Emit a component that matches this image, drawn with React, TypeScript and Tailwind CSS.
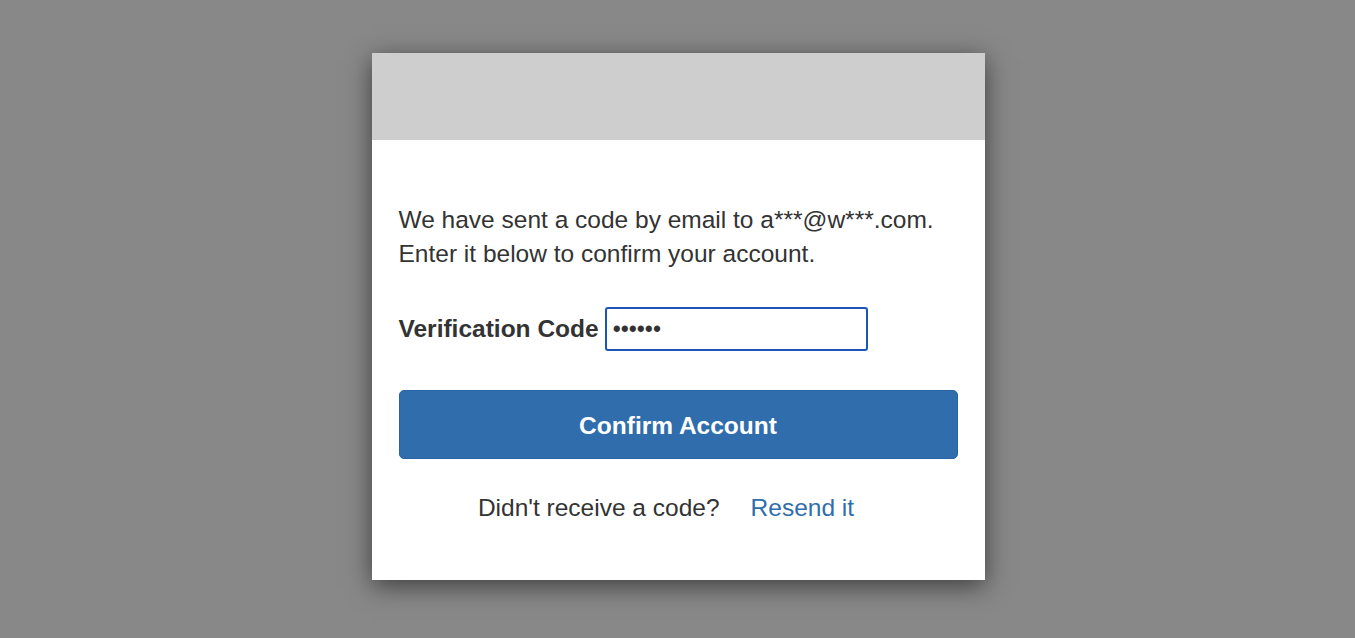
import React from "react";

export default function App() {
  return (
    <div
      className="w-full h-[638px] bg-[#888888] flex justify-center pl-px overflow-hidden"
      style={{ fontFamily: '"Liberation Sans", Arial, sans-serif' }}
    >
      <div className="mt-[53px] w-[613px] h-[527px] bg-white shadow-[0_6px_24px_rgba(0,0,0,0.55)] flex flex-col">
        <div className="h-[87px] bg-[#cecece]" />
        <div className="px-[27px] pt-[63px] flex flex-col text-[#333333]">
          <p className="text-[24.5px] leading-[34px]">
            We have sent a code by email to a***@w***.com.
            <br />
            Enter it below to confirm your account.
          </p>
          <div className="mt-[36px] flex items-center h-[44px]">
            <span className="text-[24.5px] font-bold mr-[6px]">Verification Code</span>
            <div className="w-[263px] h-[44px] border-2 border-[#1a56b5] rounded-[3px] flex items-center pl-[6px]">
              <span className="text-[23px] leading-none text-[#333333]">••••••</span>
            </div>
          </div>
          <button className="mt-[39px] h-[69px] w-full rounded-[5px] bg-[#2f6dad] border border-[#2a64a0] text-white text-[24.5px] font-bold pt-[3px]">
            Confirm Account
          </button>
          <div className="mt-[32px] h-[34px] flex justify-center items-center text-[24.5px] pr-[24px]">
            <span className="mr-[31px]">Didn't receive a code?</span>
            <span className="text-[#2f6dad]">Resend it</span>
          </div>
        </div>
      </div>
    </div>
  );
}
